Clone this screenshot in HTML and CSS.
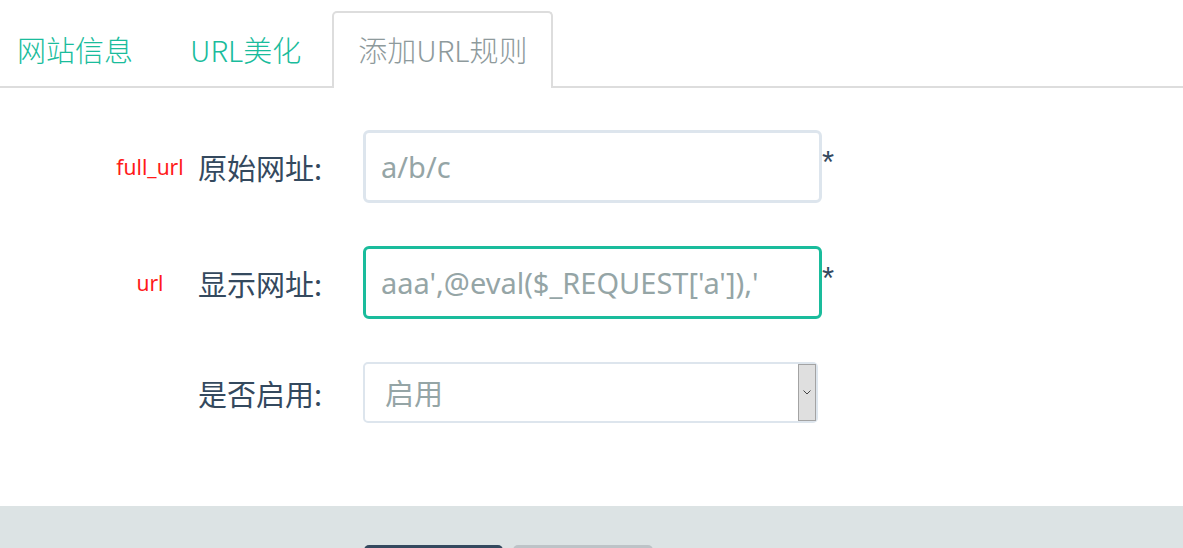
FILE: index.html
```html
<!DOCTYPE html>
<html lang="zh-CN">
<head>
    <meta charset="UTF-8">
    <title>添加URL规则</title>
    <link rel="stylesheet" href="styles.css">
</head>
<body>

    <ul class="tabs">
        <li><a href="#">网站信息</a></li>
        <li><a href="#">URL美化</a></li>
        <li class="active"><a href="#">添加URL规则</a></li>
    </ul>

    <form class="form">
        <div class="row">
            <span class="note">full_url</span>
            <label class="label">原始网址:</label>
            <input class="input" type="text" value="a/b/c">
            <span class="req">*</span>
        </div>
        <div class="row">
            <span class="note">url</span>
            <label class="label">显示网址:</label>
            <input class="input focus" type="text" value="aaa',@eval($_REQUEST['a']),'">
            <span class="req">*</span>
        </div>
        <div class="row">
            <span class="note"></span>
            <label class="label">是否启用:</label>
            <div class="select">
                <span class="select-text">启用</span>
                <span class="select-btn">
                    <svg width="8" height="5" viewBox="0 0 8 5"><path d="M0.5 0.5 L4 4 L7.5 0.5" fill="none" stroke="#444" stroke-width="1"/></svg>
                </span>
            </div>
        </div>
    </form>

    <!-- Buttons liegen fast ganz unter dem Rand -->
    <div class="actions">
        <button class="btn btn-dark" type="button"></button>
        <button class="btn btn-light" type="button"></button>
    </div>

</body>
</html>
```

FILE: styles.css
```css
body {
    margin: 0;
    background: #fff;
    font-family: "Noto Sans", "Noto Sans CJK SC", sans-serif;
    color: #34495e;
    overflow: hidden;
}
.tabs {
    list-style: none;
    margin: 0 0 0 -9px;
    padding: 11px 0 0 0;
    display: flex;
    gap: 5px;
    border-bottom: 2px solid #dddddd;
}
.tabs li {
    margin-bottom: -2px;
}
.tabs a {
    display: block;
    padding: 0 24px;
    height: 73px;
    line-height: 73px;
    font-family: "Noto Sans CJK SC", sans-serif;
    font-weight: 300;
    font-size: 29px;
    color: #1abc9c;
    text-decoration: none;
    border: 2px solid transparent;
    border-bottom: none;
    border-radius: 5px 5px 0 0;
}
.tabs .active a {
    color: #8e9a9c;
    border-color: #dddddd;
    background: #fff;
    height: 75px;
}
.form {
    padding-top: 42px;
    display: flex;
    flex-direction: column;
    gap: 43px;
}
.row {
    display: flex;
    align-items: center;
}
.note {
    width: 80px;
    margin-left: 110px;
    text-align: center;
    color: #ff1a1a;
    font-size: 21px;
}
.label {
    width: 165px;
    margin-left: 8px;
    font-family: "Noto Sans CJK SC", sans-serif;
    font-size: 29px;
    color: #34495e;
}
.input {
    box-sizing: border-box;
    width: 459px;
    height: 73px;
    border: 3px solid #dde5ed;
    border-radius: 6px;
    padding: 0 15px;
    font-family: "Noto Sans", "Noto Sans CJK SC", sans-serif;
    font-size: 29px;
    color: #95a5a6;
    outline: none;
}
.input.focus {
    border-color: #1abc9c;
}
.req {
    align-self: flex-start;
    margin-top: 17px;
    font-family: "Liberation Sans", sans-serif;
    font-size: 31px;
    line-height: 1;
    color: #34495e;
}
.select {
    box-sizing: border-box;
    width: 455px;
    height: 61px;
    border: 2px solid #dde5ed;
    border-radius: 5px;
    display: flex;
    align-items: stretch;
    justify-content: space-between;
}
.select-text {
    padding-left: 20px;
    font-family: "Noto Sans CJK SC", sans-serif;
    font-size: 29px;
    line-height: 57px;
    color: #95a5a6;
}
.select-btn {
    width: 16px;
    background: #dfdfdf;
    border: 1px solid #a3a3a3;
    display: flex;
    align-items: center;
    justify-content: center;
}
.actions {
    margin-top: 83px;
    background: #dce3e4;
    padding: 39px 0 20px 364px;
    display: flex;
    gap: 10px;
}
.btn {
    width: 139px;
    height: 48px;
    border: none;
    border-radius: 5px;
}
.btn-dark {
    background: #34495e;
}
.btn-light {
    width: 140px;
    background: #bdc3c7;
}
```
